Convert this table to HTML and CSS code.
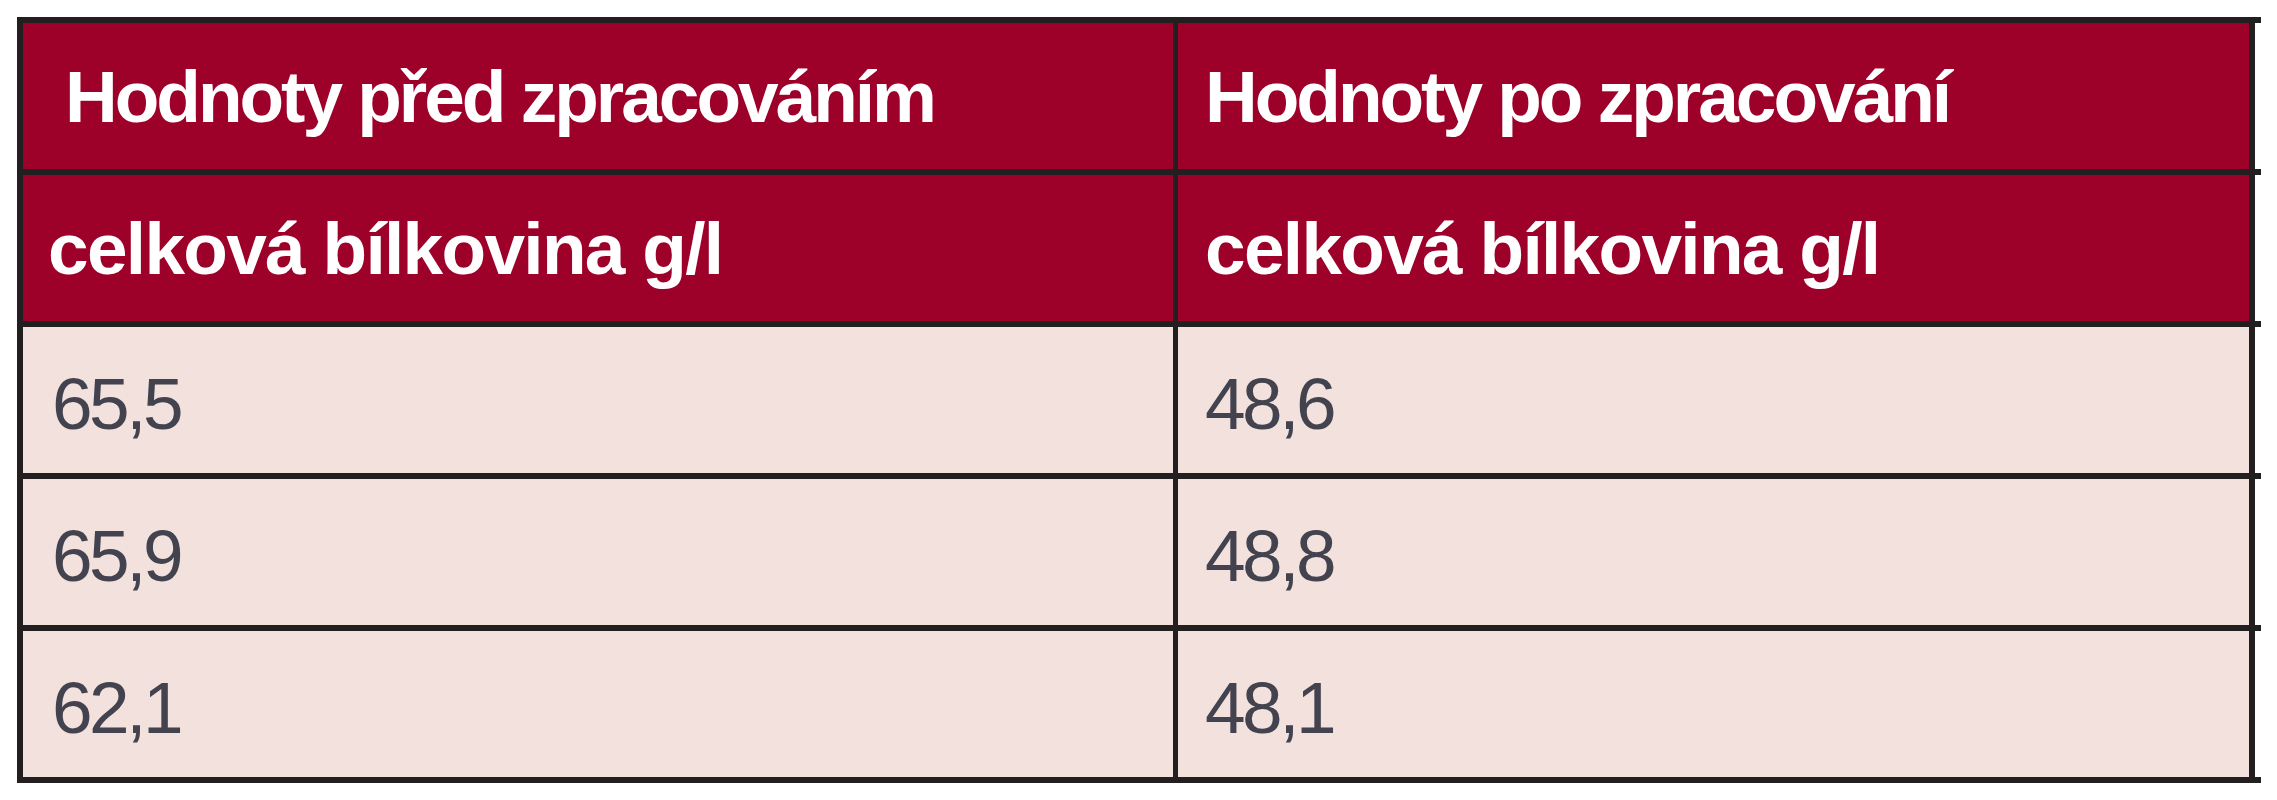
FILE: index.html
```html
<!DOCTYPE html>
<html lang="cs">
<head>
<meta charset="utf-8">
<title>Hodnoty celkové bílkoviny</title>
<link rel="stylesheet" href="styles.css">
</head>
<body>
<div class="table">
  <div class="row head">
    <div class="cell c1 lead">Hodnoty před zpracováním</div>
    <div class="cell c2">Hodnoty po zpracování</div>
  </div>
  <div class="row head sub">
    <div class="cell c1">celková bílkovina g/l</div>
    <div class="cell c2">celková bílkovina g/l</div>
  </div>
  <div class="row data">
    <div class="cell c1">65,5</div>
    <div class="cell c2">48,6</div>
  </div>
  <div class="row data">
    <div class="cell c1">65,9</div>
    <div class="cell c2">48,8</div>
  </div>
  <div class="row data">
    <div class="cell c1">62,1</div>
    <div class="cell c2">48,1</div>
  </div>
</div>
</body>
</html>
```

FILE: styles.css
```css
html, body {
  margin: 0;
  padding: 0;
  background: #ffffff;
}

body {
  font-family: "Liberation Sans", Arial, sans-serif;
}

.table {
  position: relative;
  box-sizing: border-box;
  width: 2238px;
  margin: 17px 0 0 17px;
  border: 6px solid #231f20;
}

.table::before,
.table::after,
.row::after {
  content: "";
  position: absolute;
  width: 6px;
  height: 6px;
  background: #231f20;
}

.table::before {
  top: -6px;
  right: -12px;
}

.table::after {
  bottom: -6px;
  right: -12px;
}

.row {
  position: relative;
  display: flex;
  height: 146px;
  border-bottom: 6px solid #231f20;
}

.row:last-child {
  border-bottom: 0;
}

.row:last-child::after {
  display: none;
}

.row::after {
  bottom: -6px;
  right: -12px;
}

.cell {
  box-sizing: border-box;
  display: flex;
  align-items: center;
  font-size: 73px;
  line-height: 1;
}

.c1 {
  width: 1155px;
  border-right: 5px solid #231f20;
  padding-left: 25px;
}

.c2 {
  flex: 1;
  padding-left: 27px;
}

.head .cell {
  background: #9d0029;
  color: #ffffff;
  font-weight: bold;
  letter-spacing: -3px;
}

.head .lead {
  padding-left: 42px;
}

.sub .cell {
  letter-spacing: -1.7px;
}

.data .cell {
  background: #f2e1dc;
  color: #43424f;
  letter-spacing: -3.5px;
  padding-top: 6px;
}

.data .c1 {
  padding-left: 29px;
}
```
